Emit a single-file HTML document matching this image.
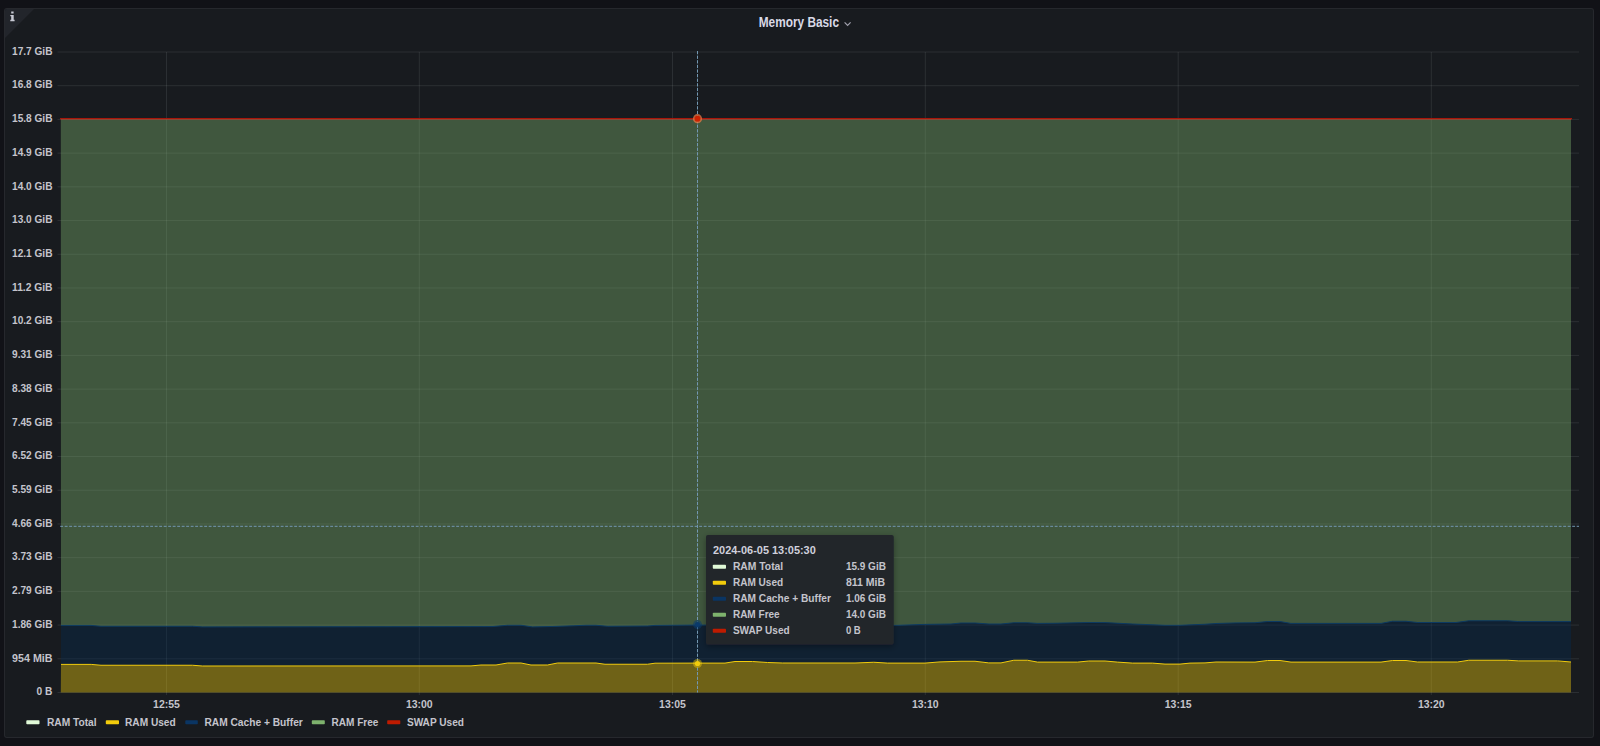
<!DOCTYPE html>
<html><head><meta charset="utf-8"><style>
html,body{margin:0;padding:0;background:#111217;width:1600px;height:746px;overflow:hidden;font-family:"Liberation Sans",sans-serif}
.panel{position:absolute;left:4px;top:8px;width:1588px;height:728px;background:#181b1f;border:1px solid rgba(204,204,220,0.08);border-radius:3px;overflow:hidden}
.corner{position:absolute;left:0;top:0;width:0;height:0;border-top:29px solid #22252b;border-right:29px solid transparent}
</style></head><body>
<div class="panel"><div class="corner"></div></div>
<svg width="1600" height="746" viewBox="0 0 1600 746" style="position:absolute;left:0;top:0">
<defs><filter id="sh" x="-10%" y="-10%" width="120%" height="130%"><feDropShadow dx="0" dy="2" stdDeviation="3" flood-color="#000" flood-opacity="0.35"/></filter></defs>
<path d="M57.5,52.00 H1579.0 M57.5,85.71 H1579.0 M57.5,119.42 H1579.0 M57.5,153.13 H1579.0 M57.5,186.84 H1579.0 M57.5,220.55 H1579.0 M57.5,254.26 H1579.0 M57.5,287.97 H1579.0 M57.5,321.68 H1579.0 M57.5,355.39 H1579.0 M57.5,389.11 H1579.0 M57.5,422.82 H1579.0 M57.5,456.53 H1579.0 M57.5,490.24 H1579.0 M57.5,523.95 H1579.0 M57.5,557.66 H1579.0 M57.5,591.37 H1579.0 M57.5,625.08 H1579.0 M57.5,658.79 H1579.0 M57.5,692.50 H1579.0 M166.5,52.0 V695.0 M419.3,52.0 V695.0 M672.5,52.0 V695.0 M925.3,52.0 V695.0 M1178.2,52.0 V695.0 M1431.3,52.0 V695.0" stroke="rgba(240,250,255,0.09)" stroke-width="1" fill="none"/>
<path d="M61.0,664.40 L91.2,664.40 L101.0,665.25 L192.5,665.25 L202.5,666.00 L471.0,665.90 L481.0,665.00 L496.0,665.00 L507.5,663.00 L521.0,663.00 L531.0,665.00 L547.5,665.00 L557.5,663.00 L596.0,663.00 L605.0,664.25 L647.5,664.25 L655.0,663.20 L697.5,663.10 L725.0,663.10 L735.0,661.50 L752.5,661.50 L767.5,662.50 L782.5,663.00 L855.0,663.00 L873.8,662.25 L887.5,663.10 L925.0,663.10 L940.0,661.90 L961.0,661.25 L975.0,661.25 L988.8,662.90 L1001.0,662.90 L1013.8,660.25 L1027.5,660.25 L1037.5,662.10 L1077.5,662.10 L1088.8,661.00 L1105.0,661.00 L1117.5,662.10 L1132.5,663.10 L1152.5,663.10 L1165.0,664.10 L1180.0,664.10 L1190.0,663.10 L1205.0,662.90 L1216.0,662.00 L1255.0,662.10 L1267.5,660.50 L1280.0,660.50 L1291.0,662.10 L1381.0,662.10 L1392.5,660.50 L1406.0,660.50 L1417.5,662.00 L1457.5,662.00 L1468.8,660.25 L1507.5,660.25 L1518.8,660.90 L1557.5,660.90 L1571.0,662.00 L1571.0,692.50 L60.8,692.50 Z" fill="rgba(242,204,12,0.4)"/>
<path d="M61.0,625.40 L91.0,625.40 L101.0,626.25 L192.5,626.25 L202.5,626.90 L492.0,626.60 L507.5,625.25 L521.0,625.25 L532.5,626.90 L552.5,626.50 L573.8,625.75 L586.0,625.25 L596.0,625.25 L607.5,626.25 L647.5,626.00 L655.0,625.40 L697.5,625.00 L800.0,625.60 L893.8,625.40 L925.0,624.40 L951.0,624.00 L961.0,623.00 L975.0,623.00 L988.8,624.00 L1001.0,624.00 L1013.8,622.75 L1027.5,622.75 L1037.5,623.40 L1055.0,623.25 L1088.8,622.50 L1105.0,622.60 L1132.5,624.00 L1165.0,625.25 L1180.0,625.25 L1205.0,624.25 L1216.0,623.50 L1236.0,622.90 L1255.0,622.75 L1267.5,621.50 L1280.0,621.50 L1291.0,623.40 L1381.0,623.40 L1392.5,621.25 L1406.0,621.25 L1417.5,622.50 L1456.0,622.50 L1468.8,620.75 L1507.5,620.75 L1518.8,621.60 L1571.0,621.60 L1571.0,662.00 L1557.5,660.90 L1518.8,660.90 L1507.5,660.25 L1468.8,660.25 L1457.5,662.00 L1417.5,662.00 L1406.0,660.50 L1392.5,660.50 L1381.0,662.10 L1291.0,662.10 L1280.0,660.50 L1267.5,660.50 L1255.0,662.10 L1216.0,662.00 L1205.0,662.90 L1190.0,663.10 L1180.0,664.10 L1165.0,664.10 L1152.5,663.10 L1132.5,663.10 L1117.5,662.10 L1105.0,661.00 L1088.8,661.00 L1077.5,662.10 L1037.5,662.10 L1027.5,660.25 L1013.8,660.25 L1001.0,662.90 L988.8,662.90 L975.0,661.25 L961.0,661.25 L940.0,661.90 L925.0,663.10 L887.5,663.10 L873.8,662.25 L855.0,663.00 L782.5,663.00 L767.5,662.50 L752.5,661.50 L735.0,661.50 L725.0,663.10 L697.5,663.10 L655.0,663.20 L647.5,664.25 L605.0,664.25 L596.0,663.00 L557.5,663.00 L547.5,665.00 L531.0,665.00 L521.0,663.00 L507.5,663.00 L496.0,665.00 L481.0,665.00 L471.0,665.90 L202.5,666.00 L192.5,665.25 L101.0,665.25 L91.2,664.40 L61.0,664.40 Z" fill="rgba(5,43,81,0.4)"/>
<path d="M60.8,118.70 L1571.0,118.70 L1571.0,621.60 L1518.8,621.60 L1507.5,620.75 L1468.8,620.75 L1456.0,622.50 L1417.5,622.50 L1406.0,621.25 L1392.5,621.25 L1381.0,623.40 L1291.0,623.40 L1280.0,621.50 L1267.5,621.50 L1255.0,622.75 L1236.0,622.90 L1216.0,623.50 L1205.0,624.25 L1180.0,625.25 L1165.0,625.25 L1132.5,624.00 L1105.0,622.60 L1088.8,622.50 L1055.0,623.25 L1037.5,623.40 L1027.5,622.75 L1013.8,622.75 L1001.0,624.00 L988.8,624.00 L975.0,623.00 L961.0,623.00 L951.0,624.00 L925.0,624.40 L893.8,625.40 L800.0,625.60 L697.5,625.00 L655.0,625.40 L647.5,626.00 L607.5,626.25 L596.0,625.25 L586.0,625.25 L573.8,625.75 L552.5,626.50 L532.5,626.90 L521.0,625.25 L507.5,625.25 L492.0,626.60 L202.5,626.90 L192.5,626.25 L101.0,626.25 L91.0,625.40 L61.0,625.40 Z" fill="rgba(126,178,109,0.4)"/>
<path d="M61.0,664.40 L91.2,664.40 L101.0,665.25 L192.5,665.25 L202.5,666.00 L471.0,665.90 L481.0,665.00 L496.0,665.00 L507.5,663.00 L521.0,663.00 L531.0,665.00 L547.5,665.00 L557.5,663.00 L596.0,663.00 L605.0,664.25 L647.5,664.25 L655.0,663.20 L697.5,663.10 L725.0,663.10 L735.0,661.50 L752.5,661.50 L767.5,662.50 L782.5,663.00 L855.0,663.00 L873.8,662.25 L887.5,663.10 L925.0,663.10 L940.0,661.90 L961.0,661.25 L975.0,661.25 L988.8,662.90 L1001.0,662.90 L1013.8,660.25 L1027.5,660.25 L1037.5,662.10 L1077.5,662.10 L1088.8,661.00 L1105.0,661.00 L1117.5,662.10 L1132.5,663.10 L1152.5,663.10 L1165.0,664.10 L1180.0,664.10 L1190.0,663.10 L1205.0,662.90 L1216.0,662.00 L1255.0,662.10 L1267.5,660.50 L1280.0,660.50 L1291.0,662.10 L1381.0,662.10 L1392.5,660.50 L1406.0,660.50 L1417.5,662.00 L1457.5,662.00 L1468.8,660.25 L1507.5,660.25 L1518.8,660.90 L1557.5,660.90 L1571.0,662.00" stroke="#F2CC0C" stroke-width="1" fill="none"/>
<path d="M61.0,625.40 L91.0,625.40 L101.0,626.25 L192.5,626.25 L202.5,626.90 L492.0,626.60 L507.5,625.25 L521.0,625.25 L532.5,626.90 L552.5,626.50 L573.8,625.75 L586.0,625.25 L596.0,625.25 L607.5,626.25 L647.5,626.00 L655.0,625.40 L697.5,625.00 L800.0,625.60 L893.8,625.40 L925.0,624.40 L951.0,624.00 L961.0,623.00 L975.0,623.00 L988.8,624.00 L1001.0,624.00 L1013.8,622.75 L1027.5,622.75 L1037.5,623.40 L1055.0,623.25 L1088.8,622.50 L1105.0,622.60 L1132.5,624.00 L1165.0,625.25 L1180.0,625.25 L1205.0,624.25 L1216.0,623.50 L1236.0,622.90 L1255.0,622.75 L1267.5,621.50 L1280.0,621.50 L1291.0,623.40 L1381.0,623.40 L1392.5,621.25 L1406.0,621.25 L1417.5,622.50 L1456.0,622.50 L1468.8,620.75 L1507.5,620.75 L1518.8,621.60 L1571.0,621.60" stroke="#0c3a62" stroke-width="1" fill="none"/>
<path d="M60.8,118.7 H1571.0" stroke="#E0F9D7" stroke-width="1" fill="none"/>
<path d="M60.099999999999994,118.7 H1572.0" stroke="#a8160a" stroke-width="1.5" fill="none"/>
<path d="M697.5,51.0 V692.5" stroke="#7398b2" stroke-width="1" stroke-dasharray="3.3 1.3" fill="none"/>
<path d="M60.2,526.3 H1579.0" stroke="#7398b2" stroke-width="1" stroke-dasharray="2.9 1.6" fill="none"/>
<circle cx="697.5" cy="118.7" r="4.6" fill="rgba(230,120,70,0.75)"/>
<circle cx="697.5" cy="118.7" r="3" fill="#cc2200"/>
<circle cx="697.5" cy="624.6" r="4.5" fill="rgba(10,60,110,0.55)"/>
<circle cx="697.5" cy="624.6" r="2.6" fill="#0b3a6a"/>
<circle cx="697.5" cy="663.5" r="4.5" fill="rgba(242,204,12,0.45)"/>
<circle cx="697.5" cy="663.5" r="2.6" fill="#F2CC0C"/>
<g font-family="Liberation Sans, sans-serif">
<text x="52.5" y="54.7" font-size="11.5" text-anchor="end" fill="#c4c4cc" font-weight="bold" textLength="40.5" lengthAdjust="spacingAndGlyphs">17.7 GiB</text>
<text x="52.5" y="88.4" font-size="11.5" text-anchor="end" fill="#c4c4cc" font-weight="bold" textLength="40.5" lengthAdjust="spacingAndGlyphs">16.8 GiB</text>
<text x="52.5" y="122.1" font-size="11.5" text-anchor="end" fill="#c4c4cc" font-weight="bold" textLength="40.5" lengthAdjust="spacingAndGlyphs">15.8 GiB</text>
<text x="52.5" y="155.8" font-size="11.5" text-anchor="end" fill="#c4c4cc" font-weight="bold" textLength="40.5" lengthAdjust="spacingAndGlyphs">14.9 GiB</text>
<text x="52.5" y="189.5" font-size="11.5" text-anchor="end" fill="#c4c4cc" font-weight="bold" textLength="40.5" lengthAdjust="spacingAndGlyphs">14.0 GiB</text>
<text x="52.5" y="223.3" font-size="11.5" text-anchor="end" fill="#c4c4cc" font-weight="bold" textLength="40.5" lengthAdjust="spacingAndGlyphs">13.0 GiB</text>
<text x="52.5" y="257.0" font-size="11.5" text-anchor="end" fill="#c4c4cc" font-weight="bold" textLength="40.5" lengthAdjust="spacingAndGlyphs">12.1 GiB</text>
<text x="52.5" y="290.7" font-size="11.5" text-anchor="end" fill="#c4c4cc" font-weight="bold" textLength="40.5" lengthAdjust="spacingAndGlyphs">11.2 GiB</text>
<text x="52.5" y="324.4" font-size="11.5" text-anchor="end" fill="#c4c4cc" font-weight="bold" textLength="40.5" lengthAdjust="spacingAndGlyphs">10.2 GiB</text>
<text x="52.5" y="358.1" font-size="11.5" text-anchor="end" fill="#c4c4cc" font-weight="bold" textLength="40.5" lengthAdjust="spacingAndGlyphs">9.31 GiB</text>
<text x="52.5" y="391.8" font-size="11.5" text-anchor="end" fill="#c4c4cc" font-weight="bold" textLength="40.5" lengthAdjust="spacingAndGlyphs">8.38 GiB</text>
<text x="52.5" y="425.5" font-size="11.5" text-anchor="end" fill="#c4c4cc" font-weight="bold" textLength="40.5" lengthAdjust="spacingAndGlyphs">7.45 GiB</text>
<text x="52.5" y="459.2" font-size="11.5" text-anchor="end" fill="#c4c4cc" font-weight="bold" textLength="40.5" lengthAdjust="spacingAndGlyphs">6.52 GiB</text>
<text x="52.5" y="492.9" font-size="11.5" text-anchor="end" fill="#c4c4cc" font-weight="bold" textLength="40.5" lengthAdjust="spacingAndGlyphs">5.59 GiB</text>
<text x="52.5" y="526.6" font-size="11.5" text-anchor="end" fill="#c4c4cc" font-weight="bold" textLength="40.5" lengthAdjust="spacingAndGlyphs">4.66 GiB</text>
<text x="52.5" y="560.4" font-size="11.5" text-anchor="end" fill="#c4c4cc" font-weight="bold" textLength="40.5" lengthAdjust="spacingAndGlyphs">3.73 GiB</text>
<text x="52.5" y="594.1" font-size="11.5" text-anchor="end" fill="#c4c4cc" font-weight="bold" textLength="40.5" lengthAdjust="spacingAndGlyphs">2.79 GiB</text>
<text x="52.5" y="627.8" font-size="11.5" text-anchor="end" fill="#c4c4cc" font-weight="bold" textLength="40.5" lengthAdjust="spacingAndGlyphs">1.86 GiB</text>
<text x="52.5" y="661.5" font-size="11.5" text-anchor="end" fill="#c4c4cc" font-weight="bold" textLength="40.4" lengthAdjust="spacingAndGlyphs">954 MiB</text>
<text x="52.5" y="695.2" font-size="11.5" text-anchor="end" fill="#c4c4cc" font-weight="bold" textLength="15.9" lengthAdjust="spacingAndGlyphs">0 B</text>
<text x="166.5" y="708.0" font-size="11.5" text-anchor="middle" fill="#c4c4cc" font-weight="bold" textLength="26.8" lengthAdjust="spacingAndGlyphs">12:55</text>
<text x="419.3" y="708.0" font-size="11.5" text-anchor="middle" fill="#c4c4cc" font-weight="bold" textLength="26.8" lengthAdjust="spacingAndGlyphs">13:00</text>
<text x="672.5" y="708.0" font-size="11.5" text-anchor="middle" fill="#c4c4cc" font-weight="bold" textLength="26.8" lengthAdjust="spacingAndGlyphs">13:05</text>
<text x="925.3" y="708.0" font-size="11.5" text-anchor="middle" fill="#c4c4cc" font-weight="bold" textLength="26.8" lengthAdjust="spacingAndGlyphs">13:10</text>
<text x="1178.2" y="708.0" font-size="11.5" text-anchor="middle" fill="#c4c4cc" font-weight="bold" textLength="26.8" lengthAdjust="spacingAndGlyphs">13:15</text>
<text x="1431.3" y="708.0" font-size="11.5" text-anchor="middle" fill="#c4c4cc" font-weight="bold" textLength="26.8" lengthAdjust="spacingAndGlyphs">13:20</text>
<text x="758.7" y="26.8" font-size="14" text-anchor="start" fill="#d8d9e6" font-weight="bold" textLength="80.3" lengthAdjust="spacingAndGlyphs">Memory Basic</text>
<path d="M844.6,22.4 L847.6,25.4 L850.6,22.4" stroke="#a0a0ac" stroke-width="1.2" fill="none"/>
<rect x="26.3" y="720.2" width="13.2" height="4" rx="0.8" fill="#E0F9D7"/>
<text x="46.9" y="725.6" font-size="11.5" text-anchor="start" fill="#c4c4cc" font-weight="bold" textLength="49.7" lengthAdjust="spacingAndGlyphs">RAM Total</text>
<rect x="105.8" y="720.2" width="13.2" height="4" rx="0.8" fill="#F2CC0C"/>
<text x="125.0" y="725.6" font-size="11.5" text-anchor="start" fill="#c4c4cc" font-weight="bold" textLength="50.7" lengthAdjust="spacingAndGlyphs">RAM Used</text>
<rect x="185.3" y="720.2" width="12.5" height="4" rx="0.8" fill="#0a3563"/>
<text x="204.4" y="725.6" font-size="11.5" text-anchor="start" fill="#c4c4cc" font-weight="bold" textLength="98.4" lengthAdjust="spacingAndGlyphs">RAM Cache + Buffer</text>
<rect x="311.8" y="720.2" width="13.0" height="4" rx="0.8" fill="#7EB26D"/>
<text x="331.5" y="725.6" font-size="11.5" text-anchor="start" fill="#c4c4cc" font-weight="bold" textLength="46.9" lengthAdjust="spacingAndGlyphs">RAM Free</text>
<rect x="387.2" y="720.2" width="13.1" height="4" rx="0.8" fill="#BF1B00"/>
<text x="406.9" y="725.6" font-size="11.5" text-anchor="start" fill="#c4c4cc" font-weight="bold" textLength="57.1" lengthAdjust="spacingAndGlyphs">SWAP Used</text>
<rect x="706" y="535" width="187.8" height="109.8" rx="2" fill="#22252b" filter="url(#sh)"/>
<text x="713.0" y="554.1" font-size="11.5" text-anchor="start" fill="#d0d0dc" font-weight="bold" textLength="102.8" lengthAdjust="spacingAndGlyphs">2024-06-05 13:05:30</text>
<rect x="712.8" y="564.8" width="13.2" height="4" rx="0.8" fill="#E0F9D7"/>
<text x="732.9" y="569.7" font-size="11.5" text-anchor="start" fill="#c4c4cc" font-weight="bold" textLength="50.3" lengthAdjust="spacingAndGlyphs">RAM Total</text>
<text x="845.9" y="569.7" font-size="11.5" text-anchor="start" fill="#c4c4cc" font-weight="bold" textLength="40.0" lengthAdjust="spacingAndGlyphs">15.9 GiB</text>
<rect x="712.8" y="580.8" width="13.2" height="4" rx="0.8" fill="#F2CC0C"/>
<text x="732.9" y="585.7" font-size="11.5" text-anchor="start" fill="#c4c4cc" font-weight="bold" textLength="50.3" lengthAdjust="spacingAndGlyphs">RAM Used</text>
<text x="845.9" y="585.7" font-size="11.5" text-anchor="start" fill="#c4c4cc" font-weight="bold" textLength="39.2" lengthAdjust="spacingAndGlyphs">811 MiB</text>
<rect x="712.8" y="596.8" width="13.2" height="4" rx="0.8" fill="#0a3563"/>
<text x="732.9" y="601.7" font-size="11.5" text-anchor="start" fill="#c4c4cc" font-weight="bold" textLength="98.0" lengthAdjust="spacingAndGlyphs">RAM Cache + Buffer</text>
<text x="845.9" y="601.7" font-size="11.5" text-anchor="start" fill="#c4c4cc" font-weight="bold" textLength="40.0" lengthAdjust="spacingAndGlyphs">1.06 GiB</text>
<rect x="712.8" y="612.8" width="13.2" height="4" rx="0.8" fill="#7EB26D"/>
<text x="732.9" y="617.7" font-size="11.5" text-anchor="start" fill="#c4c4cc" font-weight="bold" textLength="46.8" lengthAdjust="spacingAndGlyphs">RAM Free</text>
<text x="845.9" y="617.7" font-size="11.5" text-anchor="start" fill="#c4c4cc" font-weight="bold" textLength="40.0" lengthAdjust="spacingAndGlyphs">14.0 GiB</text>
<rect x="712.8" y="628.8" width="13.2" height="4" rx="0.8" fill="#BF1B00"/>
<text x="732.9" y="633.7" font-size="11.5" text-anchor="start" fill="#c4c4cc" font-weight="bold" textLength="56.8" lengthAdjust="spacingAndGlyphs">SWAP Used</text>
<text x="845.9" y="633.7" font-size="11.5" text-anchor="start" fill="#c4c4cc" font-weight="bold" textLength="14.9" lengthAdjust="spacingAndGlyphs">0 B</text>
<path d="M11.2,11.5 h2.4 v2.1 h-2.4 Z M10.3,14.9 h3.4 v4.9 h0.9 v1.4 h-4.3 v-1.4 h0.9 v-3.5 h-0.9 Z" fill="#c8cad4"/>
</g>
</svg>
</body></html>
